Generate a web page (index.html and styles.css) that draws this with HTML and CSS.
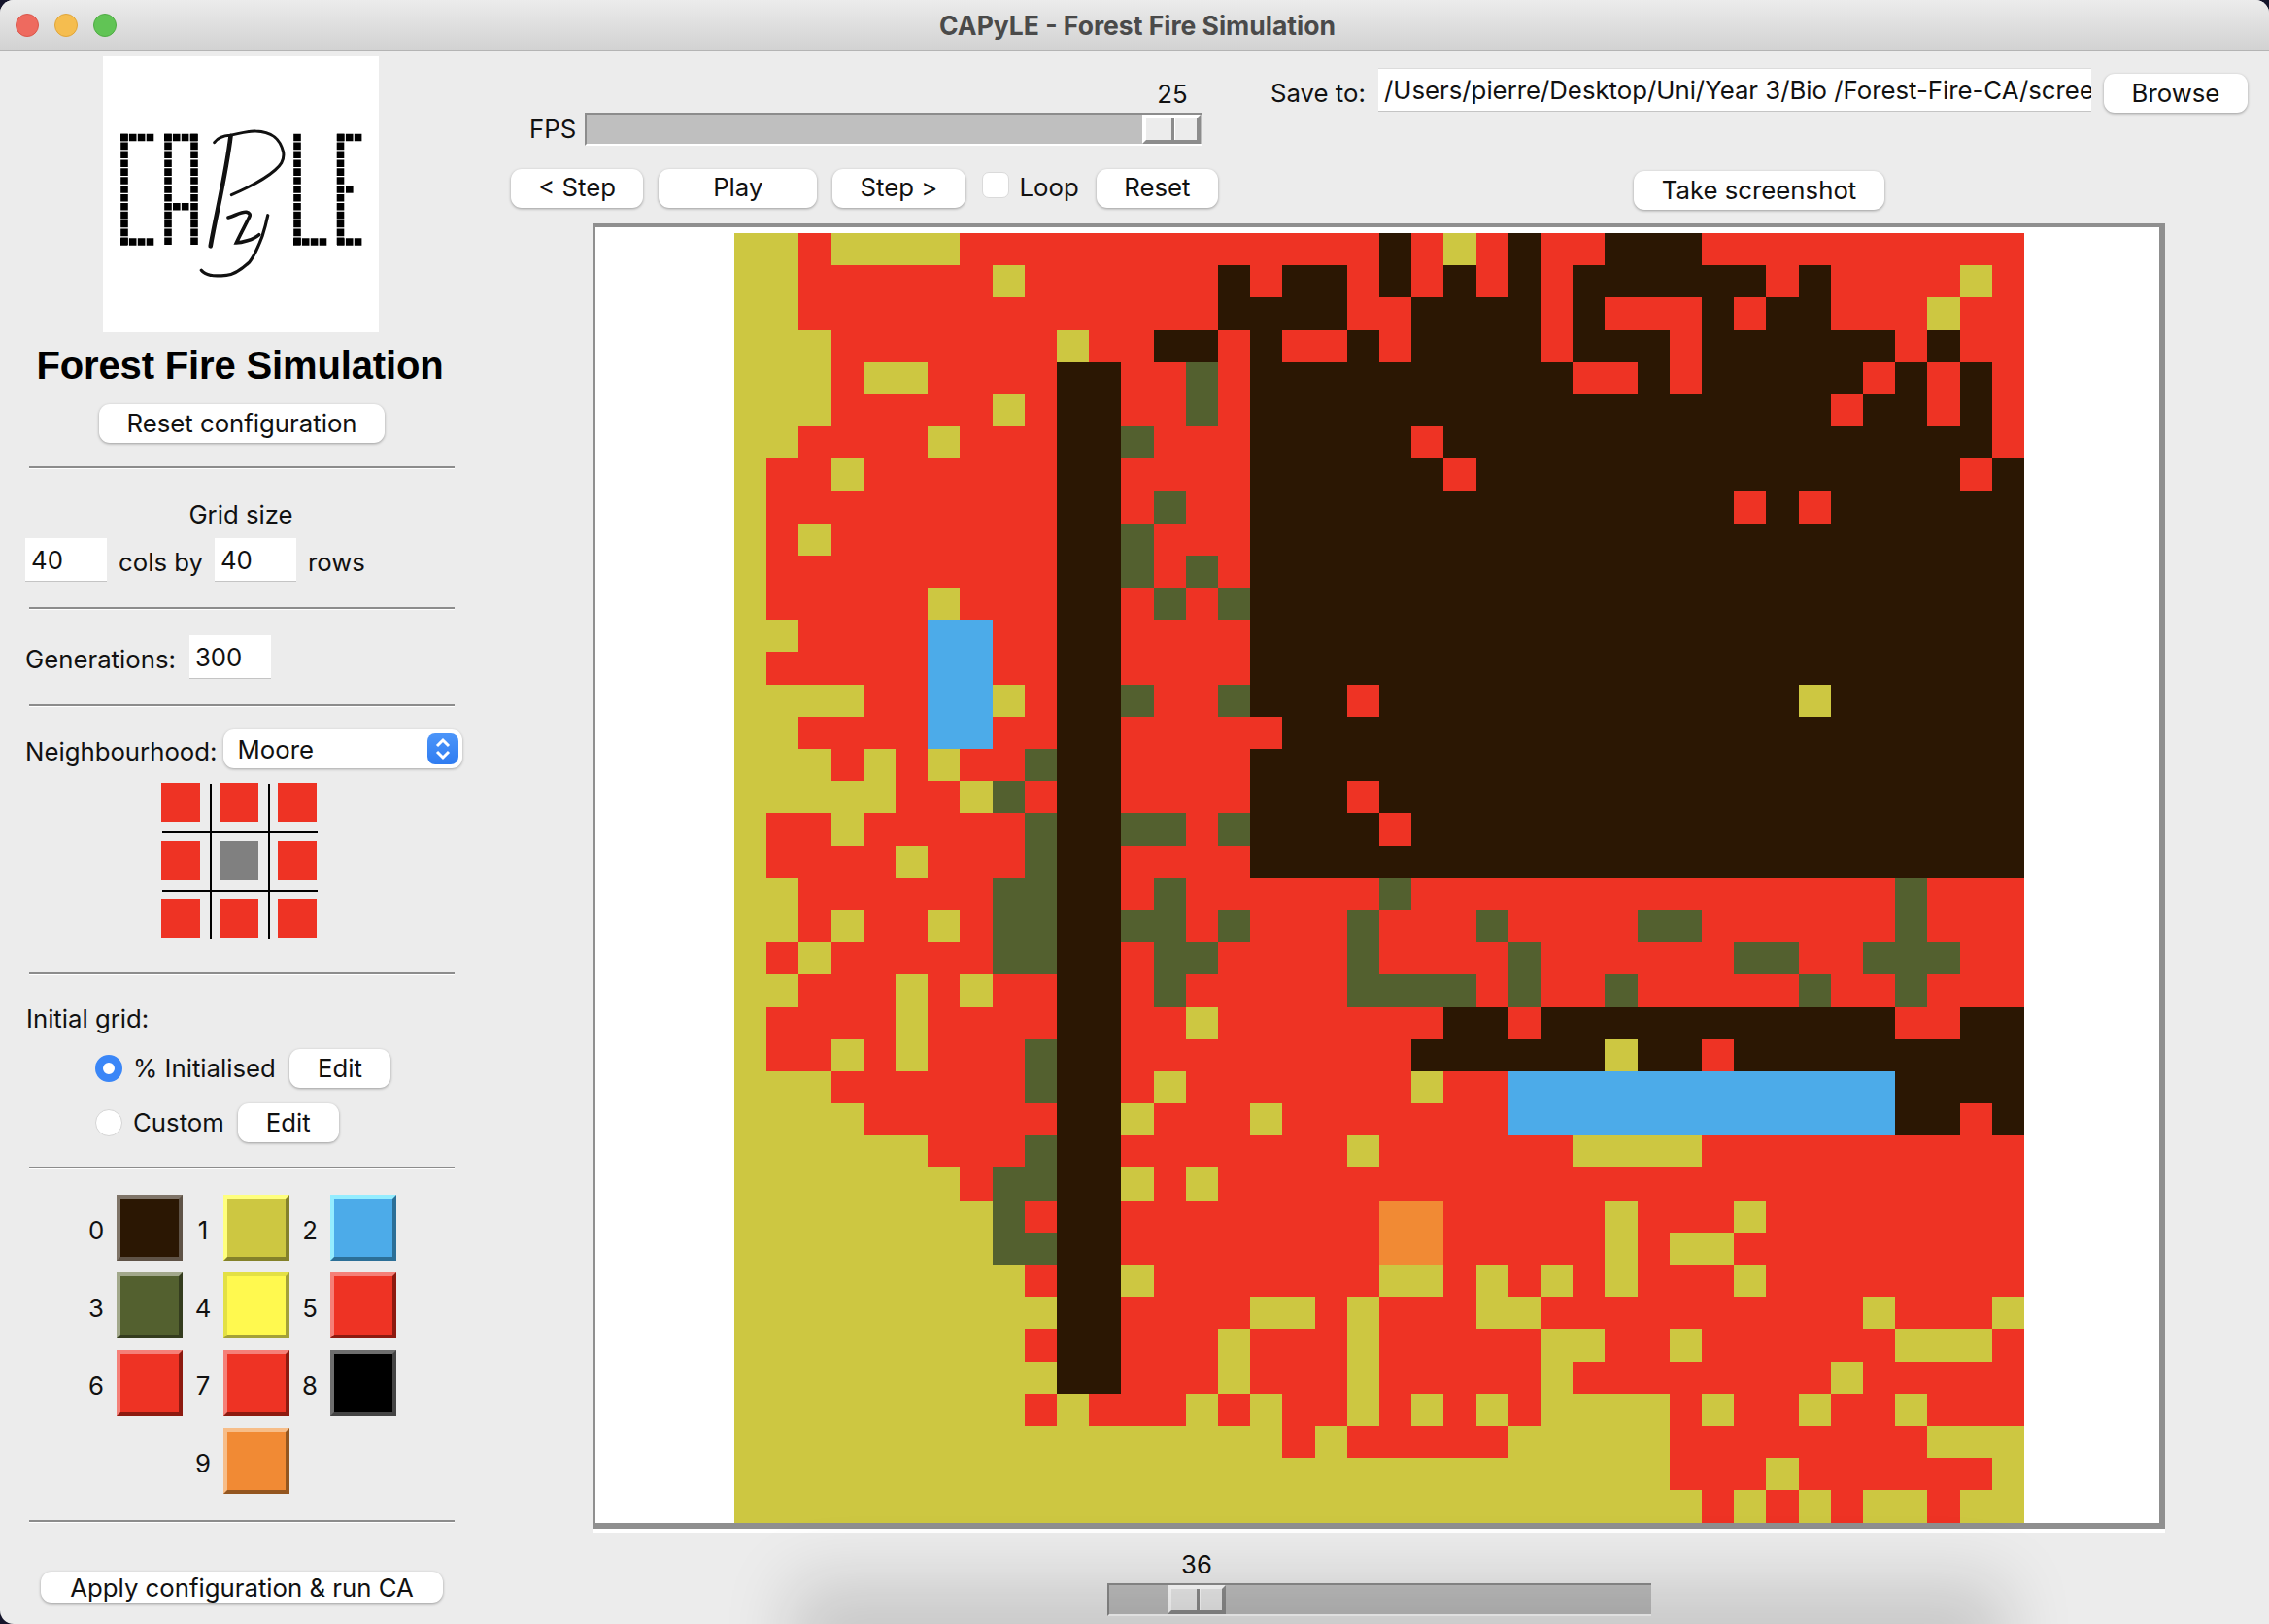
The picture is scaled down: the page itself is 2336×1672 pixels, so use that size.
FILE: index.html
```html
<!DOCTYPE html>
<html lang="en">
<head>
  <meta charset="UTF-8">
  <title>CAPyLE - Forest Fire Simulation</title>
  <link rel="stylesheet" href="styles.css">
</head>
<body>

  <div class="window">
    <div class="titlebar">
      <div class="lights">
        <span class="light light-close"></span>
        <span class="light light-min"></span>
        <span class="light light-max"></span>
      </div>
      <div class="window-title">CAPyLE - Forest Fire Simulation</div>
    </div>

    <div class="main">
      <!-- Configuration panel -->
      <div class="sidebar">
        <svg class="logo" viewBox="0 0 284 284">
          <g class="logo-dots">
            <line x1="22" y1="79.7" x2="22" y2="195"/>
            <line x1="18" y1="83.5" x2="53" y2="83.5"/>
            <line x1="18" y1="191" x2="53" y2="191"/>
            <line x1="67" y1="79.7" x2="67" y2="195"/>
            <line x1="94" y1="79.7" x2="94" y2="195"/>
            <line x1="63" y1="83.5" x2="98" y2="83.5"/>
            <line x1="72" y1="154.7" x2="89" y2="154.7"/>
            <line x1="200" y1="79.7" x2="200" y2="195"/>
            <line x1="196" y1="191" x2="231" y2="191"/>
            <line x1="244.5" y1="79.7" x2="244.5" y2="195"/>
            <line x1="241" y1="83.5" x2="267" y2="83.5"/>
            <line x1="250" y1="136.9" x2="258" y2="136.9"/>
            <line x1="241" y1="191" x2="267" y2="191"/>
          </g>
          <g class="logo-script">
            <path d="M131.5 82 C127 120 117 160 110.7 195.3" stroke-width="4.6"/>
            <path d="M114.7 88.7 C119 83 125 81.5 130.7 81.3 C142 79 150 76.5 157.3 77 C172 77.5 182 83 185.7 98.7 C187 108 182 113 177.3 117 C166 127 150 135 132.3 142.7" stroke-width="3"/>
            <path d="M129 166 C136 164 142 160 147.3 160.3 C151 161 152 163 150.7 165.3 C147 173 142 182 137.3 192 C142 192 155 189 160.7 183.7" stroke-width="3.6"/>
            <path d="M169.7 163.7 C168 172 166 179 164 185.3 C160 196 156 205 150.7 212 C142 220 135 225 127.3 225.3 C120 226 114 226 110.7 225.3 C106 224.5 103 222.5 101.3 220.3" stroke-width="3.2"/>
          </g>
        </svg>

        <h2 class="app-title">Forest Fire Simulation</h2>
        <button class="btn btn-reset-config">Reset configuration</button>

        <div class="divider divider-first"></div>

        <div class="grid-size-title">Grid size</div>
        <div class="field-row field-row-grid">
          <input class="num-input" type="text" value="40">
          <span class="field-text">cols by</span>
          <input class="num-input" type="text" value="40">
          <span class="field-text">rows</span>
        </div>

        <div class="divider"></div>

        <div class="field-row field-row-gens">
          <span class="gens-label">Generations:</span>
          <input class="num-input" type="text" value="300">
        </div>

        <div class="divider"></div>

        <div class="field-row field-row-nh">
          <span class="nh-label">Neighbourhood:</span>
          <div class="select">
            <span>Moore</span>
            <span class="select-arrows">
              <svg width="32" height="32" viewBox="0 0 32 32">
                <path d="M10 13 L16 7 L22 13 M10 19 L16 25 L22 19"/>
              </svg>
            </span>
          </div>
        </div>

        <svg class="nh-preview" width="162" height="162" viewBox="0 0 162 162">
          <rect class="nh-on" x="0" y="0" width="40" height="40"/>
          <rect class="nh-on" x="60" y="0" width="40" height="40"/>
          <rect class="nh-on" x="120" y="0" width="40" height="40"/>
          <rect class="nh-on" x="0" y="60" width="40" height="40"/>
          <rect class="nh-centre" x="60" y="60" width="40" height="40"/>
          <rect class="nh-on" x="120" y="60" width="40" height="40"/>
          <rect class="nh-on" x="0" y="120" width="40" height="40"/>
          <rect class="nh-on" x="60" y="120" width="40" height="40"/>
          <rect class="nh-on" x="120" y="120" width="40" height="40"/>
          <path class="nh-lines" d="M51 1 V161 M111 1 V161 M1 51 H161 M1 111 H161"/>
        </svg>

        <div class="divider divider-nh"></div>

        <div class="initial-title">Initial grid:</div>
        <div class="radio-row radio-row-first">
          <input class="radio" type="radio" name="init" checked>
          <span class="radio-text">% Initialised</span>
          <button class="btn btn-edit">Edit</button>
        </div>
        <div class="radio-row">
          <input class="radio" type="radio" name="init">
          <span class="radio-text">Custom</span>
          <button class="btn btn-edit">Edit</button>
        </div>

        <div class="divider divider-init"></div>

        <div class="swatches">
          <div class="swatch-item"><span>0</span><div class="swatch swatch-0"></div></div>
          <div class="swatch-item"><span>1</span><div class="swatch swatch-1"></div></div>
          <div class="swatch-item"><span>2</span><div class="swatch swatch-2"></div></div>
          <div class="swatch-item"><span>3</span><div class="swatch swatch-3"></div></div>
          <div class="swatch-item"><span>4</span><div class="swatch swatch-4"></div></div>
          <div class="swatch-item"><span>5</span><div class="swatch swatch-5"></div></div>
          <div class="swatch-item"><span>6</span><div class="swatch swatch-5"></div></div>
          <div class="swatch-item"><span>7</span><div class="swatch swatch-5"></div></div>
          <div class="swatch-item"><span>8</span><div class="swatch swatch-8"></div></div>
          <div class="swatch-item swatch-item-last"><span>9</span><div class="swatch swatch-9"></div></div>
        </div>

        <div class="divider divider-swatches"></div>

        <button class="btn btn-apply">Apply configuration &amp; run CA</button>
      </div>

      <!-- Playback controls and CA view -->
      <div class="content">
        <div class="top">
          <div class="run-controls">
            <div class="fps-row">
              <span class="fps-label">FPS</span>
              <div class="slider slider-fps">
                <div class="slider-value">25</div>
                <div class="slider-trough"><div class="slider-thumb"></div></div>
              </div>
            </div>
            <div class="btn-row">
              <button class="btn btn-step">&lt; Step</button>
              <button class="btn btn-play">Play</button>
              <button class="btn btn-step">Step &gt;</button>
              <label class="loop">
                <input class="check" type="checkbox">
                <span>Loop</span>
              </label>
              <button class="btn btn-reset">Reset</button>
            </div>
          </div>

          <div class="save-controls">
            <div class="save-row">
              <span class="save-label">Save to:</span>
              <input class="path-input" type="text" value="/Users/pierre/Desktop/Uni/Year 3/Bio /Forest-Fire-CA/screenshots">
              <button class="btn btn-browse">Browse</button>
            </div>
            <button class="btn btn-shot">Take screenshot</button>
          </div>
        </div>

        <div class="frame">
          <div class="ca-grid" id="ca-grid"></div>
        </div>

        <div class="slider slider-gen">
          <div class="slider-value">36</div>
          <div class="slider-trough"><div class="slider-thumb"></div></div>
        </div>
      </div>
    </div>

    <div class="bottom-shadow"></div>
  </div>

  <script src="script.js"></script>
</body>
</html>
```

FILE: styles.css
```css
* {
  box-sizing: border-box;
}
html {
  background-color: #15152b;
}
body {
  margin: 0;
  width: 2336px;
  height: 1672px;
  overflow: hidden;
  font-family: Inter, "Liberation Sans", sans-serif;
  font-size: 25.75px;
  color: #111;
}
.window {
  position: relative;
  height: 1672px;
  overflow: hidden;
  background-color: #ececec;
  border-radius: 14px 14px 0 14px;
}

/* Title bar */
.titlebar {
  display: grid;
  grid-template-columns: 1fr auto 1fr;
  align-items: center;
  height: 53px;
  background: linear-gradient(#ececec, #d2d2d2);
  border-bottom: 2px solid #b4b4b4;
}
.lights {
  display: flex;
  gap: 16px;
  padding-left: 16px;
}
.light {
  width: 24px;
  height: 24px;
  border-radius: 50%;
}
.light-close {
  background-color: #ee6a5f;
  border: 1px solid #d9574c;
}
.light-min {
  background-color: #f5bd4f;
  border: 1px solid #dfa53a;
}
.light-max {
  background-color: #61c455;
  border: 1px solid #50ab45;
}
.window-title {
  margin-left: 6px;
  font-size: 26.5px;
  font-weight: 700;
  color: #4a4a4a;
}

.main {
  display: flex;
}

/* Sidebar */
.sidebar {
  flex: none;
  width: 496px;
  display: flex;
  flex-direction: column;
  align-items: flex-start;
}
.logo {
  display: block;
  width: 284px;
  height: 284px;
  margin: 5px 0 0 106px;
  background-color: #fff;
}
.logo-dots line {
  stroke: #000;
  stroke-width: 7.6;
  stroke-dasharray: 7.6 1.3;
}
.logo-script path {
  fill: none;
  stroke: #111;
  stroke-linecap: round;
}
.app-title {
  width: 494px;
  margin: 11px 0 0;
  font-family: "Liberation Sans", sans-serif;
  font-size: 40px;
  font-weight: bold;
  line-height: 46px;
  letter-spacing: -0.15px;
  text-align: center;
  color: #000;
}
.btn {
  height: 40px;
  padding: 0 0 2px;
  font-family: inherit;
  font-size: 25.75px;
  color: #111;
  background-color: #fff;
  border: none;
  border-radius: 11px;
  box-shadow: 0 1px 3px rgba(0, 0, 0, 0.35);
  cursor: pointer;
}
.btn-reset-config {
  width: 294px;
  margin: 17px 0 0 102px;
}
.divider {
  width: 438px;
  height: 3px;
  margin: 26px 0 0 30px;
  background-color: #8c8c8c;
  border-bottom: 1px solid #fff;
}
.divider-first {
  margin-top: 24px;
}
.divider-nh {
  margin-top: 33px;
}
.divider-init {
  margin-top: 25px;
}
.divider-swatches {
  margin-top: 27px;
}
.grid-size-title {
  width: 496px;
  margin-top: 32px;
  line-height: 30px;
  text-align: center;
}
.field-row {
  display: flex;
  align-items: center;
  padding-left: 26px;
}
.field-row-grid {
  margin-top: 9px;
}
.field-text {
  margin: 4px 12px 0 12px;
}
.field-row-gens {
  gap: 14px;
  margin-top: 26px;
}
.gens-label {
  margin-top: 3px;
}
.field-row-nh {
  gap: 6px;
  margin-top: 23px;
}
.nh-label {
  margin-top: 5px;
}
.num-input {
  width: 84px;
  height: 45px;
  padding: 0 0 0 6px;
  font-family: inherit;
  font-size: 25.75px;
  color: #111;
  background-color: #fff;
  border: none;
  border-bottom: 1px solid #c4c4c4;
  border-radius: 0;
}
.select {
  display: flex;
  align-items: center;
  justify-content: space-between;
  width: 246px;
  height: 40px;
  padding: 0 4px 0 15px;
  background-color: #fff;
  border-radius: 11px;
  box-shadow: 0 1px 3px rgba(0, 0, 0, 0.3);
}
.select-arrows {
  display: block;
  width: 32px;
  height: 32px;
  background: linear-gradient(#4c95f9, #2f7cf1);
  border-radius: 8px;
}
.select-arrows svg {
  display: block;
}
.select-arrows path {
  fill: none;
  stroke: #fff;
  stroke-width: 3;
}
.nh-preview {
  display: block;
  margin: 15px 0 0 166px;
}
.nh-on {
  fill: #ee3324;
}
.nh-centre {
  fill: #808080;
}
.nh-lines {
  fill: none;
  stroke: #000;
  stroke-width: 2;
}
.initial-title {
  margin: 30px 0 0 27px;
  line-height: 30px;
}
.radio-row {
  display: flex;
  align-items: center;
  height: 40px;
  margin-top: 16px;
  padding-left: 98px;
}
.radio {
  appearance: none;
  width: 28px;
  height: 28px;
  margin: 0 11px 0 0;
  background-color: #fff;
  border: 1px solid #d5d5d5;
  border-radius: 50%;
}
.radio:checked {
  border: 8px solid #3a86f7;
}
.radio-text {
  padding-bottom: 2px;
}
.btn-edit {
  width: 104px;
  margin-left: 14px;
}
.swatches {
  display: grid;
  grid-template-columns: repeat(3, 110px);
  row-gap: 12px;
  margin: 26px 0 0 78px;
}
.swatch-item {
  display: flex;
  align-items: center;
}
.swatch-item span {
  width: 42px;
  padding-top: 5px;
  text-align: center;
}
.swatch-item-last {
  grid-column: 2;
}
.swatch {
  width: 68px;
  height: 68px;
  border-width: 4px;
  border-style: solid;
}
.swatch-0 {
  background-color: #2b1703;
  border-color: #7f7468 #5f5347 #5f5347 #7f7468;
}
.swatch-1 {
  background-color: #cdc741;
  border-color: #ffff7e #84812a #84812a #ffff7e;
}
.swatch-2 {
  background-color: #4cabe9;
  border-color: #94edff #2c6f97 #2c6f97 #94edff;
}
.swatch-3 {
  background-color: #53602f;
  border-color: #a2a88b #343c1e #343c1e #a2a88b;
}
.swatch-4 {
  background-color: #fff94f;
  border-color: #e3e044 #a4a138 #a4a138 #e3e044;
}
.swatch-5 {
  background-color: #ee3324;
  border-color: #f58078 #8d1a10 #8d1a10 #f58078;
}
.swatch-8 {
  background-color: #000;
  border-color: #6e6e6e #444 #444 #6e6e6e;
}
.swatch-9 {
  background-color: #f18a34;
  border-color: #f7bd88 #94561f #94561f #f7bd88;
}
.btn-apply {
  width: 414px;
  height: 32px;
  margin: 50px 0 0 42px;
  padding: 0;
}

/* Top controls */
.content {
  flex: 1;
}
.top {
  display: flex;
  height: 177px;
}
.run-controls {
  flex: none;
  width: 758px;
  padding-left: 30px;
}
.fps-row {
  display: flex;
  align-items: flex-end;
  padding: 29px 0 0 19px;
}
.fps-label {
  width: 57px;
  line-height: 34px;
}
.btn-row {
  display: flex;
  gap: 16px;
  margin-top: 24px;
}
.btn-row .btn {
  padding-bottom: 4px;
}
.btn-step {
  width: 137px;
}
.btn-play {
  width: 164px;
}
.btn-reset {
  width: 126px;
}
.loop {
  display: flex;
  align-items: center;
  gap: 11px;
  margin: 0 2px 0 1px;
  padding-bottom: 4px;
}
.check {
  appearance: none;
  width: 28px;
  height: 27px;
  margin: 0 0 4px;
  background-color: #fff;
  border: 1px solid #dadada;
  border-radius: 7px;
}
.save-controls {
  margin-left: 54px;
  padding-top: 17px;
}
.save-row {
  display: flex;
  align-items: flex-start;
}
.save-label {
  width: 111px;
  line-height: 52px;
}
.path-input {
  width: 734px;
  height: 45px;
  padding: 0 0 0 6px;
  font-family: inherit;
  font-size: 25.75px;
  color: #111;
  background-color: #fff;
  border: none;
  border-top: 1px solid #dcdcdc;
  border-bottom: 1px solid #c4c4c4;
  border-radius: 0;
}
.btn-browse {
  width: 148px;
  margin: 6px 0 0 13px;
}
.btn-shot {
  display: block;
  width: 258px;
  margin: 54px 0 0 374px;
}

/* Sliders */
.slider-value {
  height: 30px;
  line-height: 30px;
  text-align: center;
}
.slider-trough {
  display: flex;
  height: 34px;
  margin-top: 4px;
  background-color: #bfbfbf;
  border-top: 2px solid #8c8c8c;
  border-left: 2px solid #8c8c8c;
  border-bottom: 2px solid #fff;
}
.slider-thumb {
  position: relative;
  height: 30px;
  background-color: #ececec;
  border-top: 4px solid #fff;
  border-left: 4px solid #fff;
  border-right: 4px solid #8c8c8c;
  border-bottom: 4px solid #8c8c8c;
}
.slider-thumb::after {
  content: "";
  position: absolute;
  top: 0;
  bottom: 0;
  left: 50%;
  width: 3px;
  background-color: #8c8c8c;
  border-right: 1px solid #fff;
}
.slider-fps {
  width: 636px;
}
.slider-fps .slider-value {
  width: 62px;
  margin-left: 574px;
}
.slider-fps .slider-thumb {
  width: 60px;
  margin-left: 572px;
}
.slider-gen {
  width: 560px;
  margin: 22px 0 0 644px;
}
.slider-gen .slider-value {
  width: 60px;
  margin-left: 62px;
}
.slider-gen .slider-thumb {
  width: 60px;
  margin-left: 60px;
}

/* CA view */
.frame {
  width: 1619px;
  margin-left: 114px;
  padding: 6px 0 6px 143px;
  background: linear-gradient(#8f8f8f, #8f8f8f) no-repeat left bottom / 100% 6px, #fff;
  border-style: solid;
  border-color: #8f8f8f;
  border-width: 4px 6px 0 3px;
  box-shadow: 0 4px 0 #fff;
}
.ca-grid {
  display: grid;
  grid-template-columns: repeat(40, 1fr);
  grid-auto-rows: 33.2px;
  width: 1328px;
  height: 1328px;
}
.state-0 { background-color: #2b1703; }
.state-1 { background-color: #cdc741; }
.state-2 { background-color: #4cabe9; }
.state-3 { background-color: #53602f; }
.state-5 { background-color: #ee3324; }
.state-9 { background-color: #f18a34; }

/* Soft shadow of the window behind, along the bottom edge */
.bottom-shadow {
  position: absolute;
  left: 860px;
  bottom: -30px;
  width: 1160px;
  height: 30px;
  background-color: rgba(0, 0, 0, 0.2);
  box-shadow: 0 0 70px 45px rgba(0, 0, 0, 0.15);
  pointer-events: none;
}
```

FILE: script.js
```js
// Cell states of the CA, one string per row, 40 by 40
const rows = [
  '1151111555555555555505150550005555555555',
  '1155555515555550500505050500000050555515',
  '1155555555555550000550000505550500555155',
  '1115555555155005055050000500050000005055',
  '1115115555005535000000000055050000050505',
  '1115555515005535000000000000000000500505',
  '1155551555003555000005000000000000000005',
  '1551555555005555000000500000000000000050',
  '1555555555005355000000000000000505000000',
  '1515555555003555000000000000000000000000',
  '1555555555003535000000000000000000000000',
  '1555551555005353000000000000000000000000',
  '1155552255005555000000000000000000000000',
  '1555552255005555000000000000000000000000',
  '1111552215003553000500000000000001000000',
  '1155552255005555500000000000000000000000',
  '1115151553005555000000000000000000000000',
  '1111155135005555000500000000000000000000',
  '1551555553003353000050000000000000000000',
  '1555515553005555000000000000000000000000',
  '1155555533005355555535555555555555553555',
  '1151551533003353555355535555335555553555',
  '1515555533005335555355553555555335533355',
  '1155515155005355555333353553555553553555',
  '1555515555005515555555005000000000005500',
  '1551515553005555555550000001005000000000',
  '1115555553005155555551552222222222220000',
  '1111555555001555155555552222222222220050',
  '1111115553005555555155555511115555555555',
  '1111111533001515555555555555555555555555',
  '1111111135005555555599555551555155555555',
  '1111111133005555555599555551511555555555',
  '1111111115001555555511515151555155555555',
  '1111111111005555115155511555555555515551',
  '1111111115005551555155555115515555551115',
  '1111111111005551555155555155555555155555',
  '1111111115155515155151515111151551551555',
  '1111111111111111151555551111155555555111',
  '1111111111111111111111111111155515555551',
  '1111111111111111111111111111115151511511'
];

const grid = document.getElementById('ca-grid');

rows.forEach(row => {
  for (const state of row) {
    const cell = document.createElement('div');
    cell.className = 'state-' + state;
    grid.appendChild(cell);
  }
});
```
